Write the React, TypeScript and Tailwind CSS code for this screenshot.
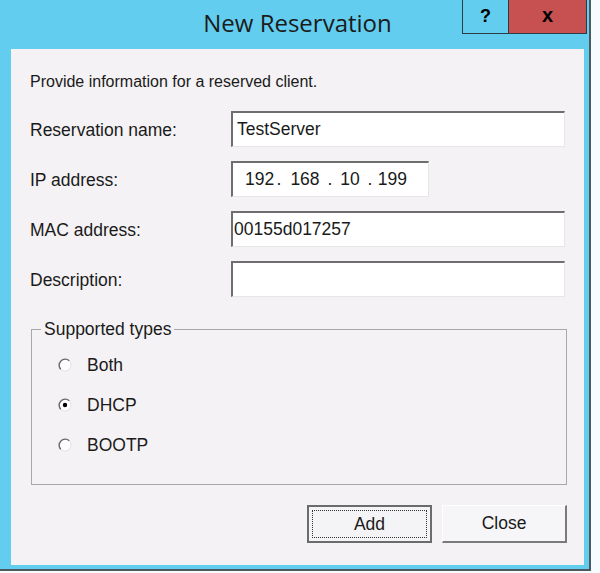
import React from "react";

const body = { fontFamily: '"Liberation Sans", Arial, sans-serif' };
const title = { fontFamily: '"Open Sans", "Noto Sans", sans-serif' };

function Radio({ checked }: { checked?: boolean }) {
  return (
    <svg width="14" height="14" viewBox="0 0 14 14" className="shrink-0">
      <circle cx="7" cy="7" r="6" fill="#ffffff" stroke="#e2e2e2" strokeWidth="1" />
      <path d="M2.76 11.24 A6 6 0 0 1 11.24 2.76" stroke="#6a6a6a" strokeWidth="1.4" fill="none" />
      {checked && <circle cx="7" cy="7" r="2.2" fill="#000000" />}
    </svg>
  );
}

function Field({ label, children }: { label: string; children: React.ReactNode }) {
  return (
    <div className="flex h-[36px] items-center">
      <div className="w-[201px] pt-[3px] text-[17.5px] text-[#1a1a1a]">{label}</div>
      {children}
    </div>
  );
}

const sunken =
  "h-[36px] bg-white border-t-2 border-l-2 border-r border-b border-t-[#6e6e6e] border-l-[#6e6e6e] border-r-[#e6e6e6] border-b-[#e6e6e6] flex items-center text-[17.5px] text-[#1a1a1a]";

export default function App() {
  return (
    <div className="w-[600px] h-[573px] bg-[#f6fbfd] overflow-hidden" style={body}>
      <div className="w-[591px] h-[571px] bg-[#62cdee] border-r-2 border-b-2 border-[#4b5a60]">
        <div className="relative h-[49px]">
          <div className="pt-[6px] pl-[6px] text-center text-[24px] leading-[34px] text-[#1b1b1b]" style={title}>
            New Reservation
          </div>
          <div className="absolute top-0 right-[2px] flex h-[34px] border border-t-0 border-[#2c3b44]">
            <div className="w-[46px] flex items-center justify-center border-r border-[#2c3b44] bg-[#62cdee] text-[18px] font-bold text-black">
              ?
            </div>
            <div className="w-[77px] flex items-center justify-center bg-[#c75050] text-[20px] font-bold leading-none text-black pb-[3px]">
              x
            </div>
          </div>
        </div>
        <div className="ml-[11px] w-[573px] h-[516px] bg-[#f4f2f5] pl-[19px] pr-[17px] pt-[23px] flex flex-col">
          <div className="h-[20px] leading-[20px] text-[16px] text-[#1a1a1a]">
            Provide information for a reserved client.
          </div>
          <div className="mt-[19px] flex flex-col gap-[14px]">
            <Field label="Reservation name:">
              <div className={`${sunken} w-[334px] pl-[4px]`}>TestServer</div>
            </Field>
            <Field label="IP address:">
              <div className={`${sunken} w-[198px] pl-[12px]`}>
                <span className="w-[26px]">192</span>
                <span className="w-[16px] text-center">.</span>
                <span className="w-[36px] text-center">168</span>
                <span className="w-[14px] text-center">.</span>
                <span className="w-[26px] text-center">10</span>
                <span className="w-[14px] text-center">.</span>
                <span className="w-[30px] text-right">199</span>
              </div>
            </Field>
            <Field label="MAC address:">
              <div className={`${sunken} w-[334px] pl-[1px]`}>00155d017257</div>
            </Field>
            <Field label="Description:">
              <div className={`${sunken} w-[334px]`}></div>
            </Field>
          </div>
          <fieldset className="mt-[22px] ml-[1px] h-[166px] border border-[#a8a8a8] pl-[26px] pt-[6px]">
            <legend className="-ml-[17px] px-[3px] text-[17.5px] leading-[20px] text-[#1a1a1a]">Supported types</legend>
            {[
              { l: "Both", c: false },
              { l: "DHCP", c: true },
              { l: "BOOTP", c: false },
            ].map((r) => (
              <div key={r.l} className="flex h-[40px] items-center gap-[15px] text-[17.5px] text-[#1a1a1a]">
                <Radio checked={r.c} />
                <span>{r.l}</span>
              </div>
            ))}
          </fieldset>
          <div className="mt-[20px] flex justify-end gap-[10px]">
            <div className="w-[125px] h-[38px] border-2 border-[#6b6b6b] bg-[#f4f3f5] p-[3px]">
              <div className="h-full border border-dotted border-[#333] flex items-center justify-center text-[17.5px] text-[#1a1a1a]">
                Add
              </div>
            </div>
            <div className="w-[125px] h-[38px] border-t border-l border-r-2 border-b-2 border-t-white border-l-white border-r-[#7a7a7a] border-b-[#7a7a7a] bg-[#f6f5f7] flex items-center justify-center text-[17.5px] text-[#1a1a1a]">
              Close
            </div>
          </div>
        </div>
      </div>
    </div>
  );
}
